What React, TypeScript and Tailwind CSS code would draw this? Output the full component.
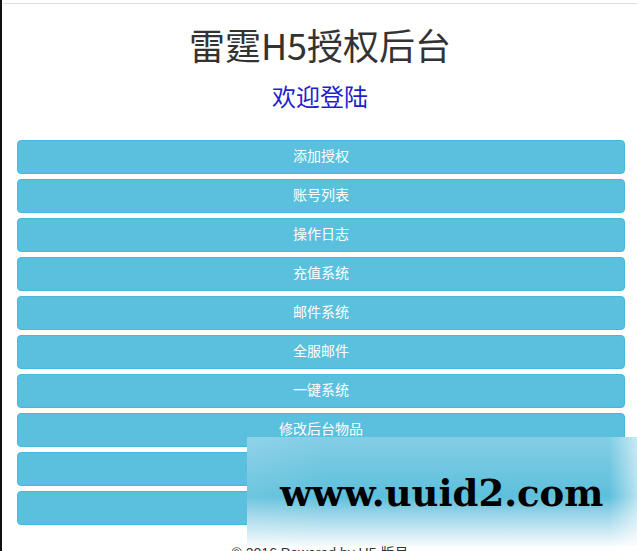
const menu = [
  "添加授权",
  "账号列表",
  "操作日志",
  "充值系统",
  "邮件系统",
  "全服邮件",
  "一键系统",
  "修改后台物品",
  "修改密码",
  "退出登陆",
]

const App = () => {
  return (
    <div className="relative min-h-screen overflow-hidden border-l-2 border-[#111] bg-white font-['Liberation_Sans','Noto_Sans_CJK_SC',sans-serif] text-[#333]">
      <div className="mt-[3px] ml-px border-t border-[#ddd]">
        <h1 className="mt-[21px] text-center font-['Noto_Sans_CJK_SC',sans-serif] text-[36px] leading-[1.1] font-normal text-[#333]">
          雷霆H5授权后台
        </h1>
        <h3 className="mt-[18px] text-center font-['Noto_Sans_CJK_SC',sans-serif] text-[24px] leading-[1.1] text-[#1f1fcc]">
          欢迎登陆
        </h3>

        <div className="mt-[31px] flex flex-col gap-[5px] pl-[14px] pr-[12px]">
          {menu.map((m) => (
            <button
              key={m}
              className="flex h-[34px] items-center justify-center rounded-[4px] border border-[#46b8da] bg-[#5bc0de] text-[14px] text-white"
            >
              {m}
            </button>
          ))}
        </div>

        <div className="mt-[18px] text-center text-[14px] leading-5 text-[#333]">
          © 2016 Powered by H5 版号
        </div>
      </div>

      {/* watermark overlay */}
      <div className="absolute left-[245px] top-[437px] h-[109px] w-[392px] bg-linear-to-b from-[#84cee5] via-[#5cbfdc] via-55% to-[#f6fbfd]">
        <div className="absolute inset-0 bg-linear-to-r from-white/10 via-transparent via-20% to-transparent" />
        <div className="absolute inset-y-0 right-0 w-[30px] bg-linear-to-r from-transparent to-white/60" />
        <div className="relative pl-[33px] pt-[36px] font-['DejaVu_Serif',serif] text-[37px] leading-[1.1] font-bold text-black">
          www.uuid2.com
        </div>
      </div>
    </div>
  )
}

export default App
